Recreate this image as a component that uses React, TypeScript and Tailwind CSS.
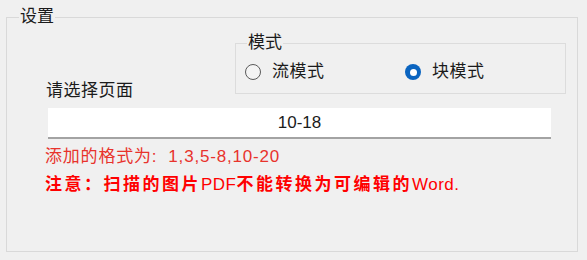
import React, { useState } from "react";

const MODES = [
  { id: "flow", label: "流模式" },
  { id: "block", label: "块模式" },
];

function Radio({ checked }: { checked: boolean }) {
  if (checked) {
    return (
      <span className="flex h-[16px] w-[16px] items-center justify-center rounded-full bg-[#0a64c0]">
        <span className="h-[7px] w-[7px] rounded-full bg-white" />
      </span>
    );
  }
  return <span className="h-[16px] w-[16px] rounded-full border border-[#5a5a5a] bg-[#f4f4f4]" />;
}

export default function App() {
  const [mode, setMode] = useState("block");
  const [pages, setPages] = useState("10-18");

  return (
    <div
      className="h-[260px] w-[587px] bg-[#f0f0f0] px-[6px] pt-[7px] text-[#1b1b1b]"
      style={{ fontFamily: '"Liberation Sans", "Noto Sans CJK SC", sans-serif' }}
    >
      <fieldset className="h-[245px] w-[572px] border border-[#d9d9d9]">
        <legend className="ml-[12px] px-[1px] text-[17px] leading-[20px]">设置</legend>

        {/* page label + mode box */}
        <div className="flex items-start pl-[39px]">
          <div className="mt-[54px] w-[189px] text-[17px] leading-[20px] tracking-[0.5px]">请选择页面</div>
          <fieldset className="mt-[6px] h-[61px] w-[318px] border border-[#dcdcdc]">
            <legend className="ml-[11px] px-[1px] text-[17px] leading-[20px]">模式</legend>
            <div className="mt-[9px] flex h-[20px] items-center pl-[9px]">
              {MODES.map((m) => (
                <button
                  key={m.id}
                  onClick={() => setMode(m.id)}
                  className="flex w-[160px] items-center gap-[11px] text-[17px] leading-[20px] tracking-[0.5px]"
                >
                  <Radio checked={mode === m.id} />
                  {m.label}
                </button>
              ))}
            </div>
          </fieldset>
        </div>

        {/* page range input */}
        <input
          value={pages}
          onChange={(e) => setPages(e.target.value)}
          className="ml-[41px] mt-[7px] block h-[31px] w-[503px] border-b-2 border-[#a3a3a3] bg-white text-center text-[17px] leading-[20px] outline-none"
        />

        <div className="ml-[38px] mt-[8px] text-[17px] leading-[20px] tracking-[0.8px] text-[#e8332c]">
          添加的格式为:&nbsp; 1,3,5-8,10-20
        </div>
        <div className="ml-[38px] mt-[8px] text-[17px] font-bold leading-[20px] tracking-[2.5px] text-[#ff0000]">
          注意：扫描的图片<span className="font-normal tracking-[0.5px]">PDF</span>不能转换为可编辑的
          <span className="font-normal tracking-[0.5px]">Word.</span>
        </div>
      </fieldset>
    </div>
  );
}
